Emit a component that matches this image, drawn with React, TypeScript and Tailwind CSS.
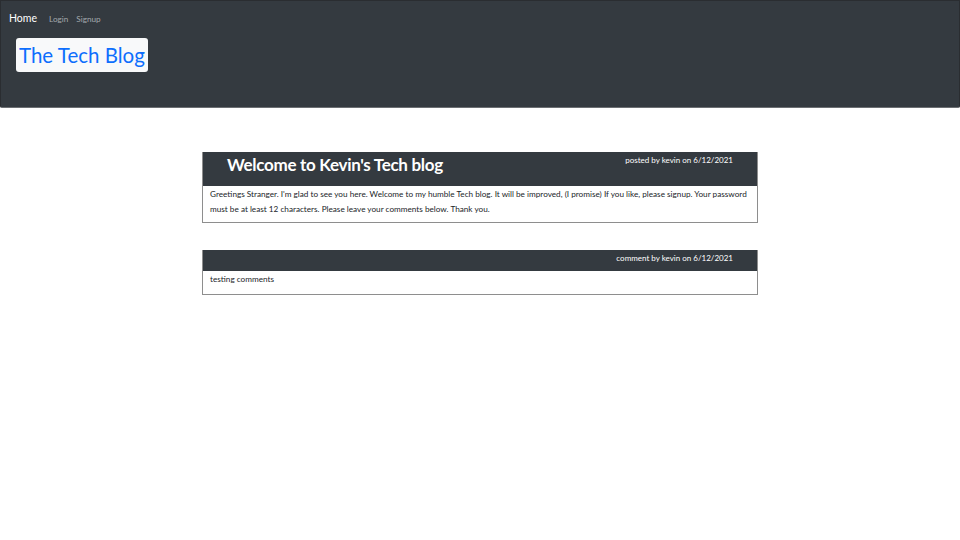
export default function App() {
  return (
    <div className="min-h-[540px] w-full bg-white font-['Lato',sans-serif]">
      {/* Header */}
      <header className="h-[108px] border border-[#2a2d31] border-b-[#6c6f73] bg-[#343a40] rounded-b-[2px]">
        <nav className="flex items-baseline px-[8px] pt-[10px]">
          <a className="text-[10.5px] text-white">Home</a>
          <a className="ml-[12px] text-[8.2px] text-[#a3a8ad]">Login</a>
          <a className="ml-[8px] text-[8.2px] text-[#a3a8ad]">Signup</a>
        </nav>
        <div className="ml-[15px] mt-[11px] inline-flex h-[34px] items-center rounded-[3px] bg-[#f8f9fa] px-[3px]">
          <h1 className="text-[20.5px] leading-none text-[#0d6efd]">The Tech Blog</h1>
        </div>
      </header>

      <main className="mx-auto mt-[44px] flex w-[556px] flex-col gap-[27px]">
        {/* Post */}
        <section className="border border-[#8e8e8e] border-t-0">
          <div className="flex h-[34px] items-start justify-between bg-[#343a40] px-[24px]">
            <h2 className="mt-[2px] text-[17px] leading-[22px] font-bold tracking-[-0.3px] text-white">
              Welcome to Kevin's Tech blog
            </h2>
            <span className="mt-[2px] text-[8px] text-white">posted by kevin on 6/12/2021</span>
          </div>
          <p className="px-[7px] pt-[1px] pb-[5px] text-[8.2px] leading-[15px] text-[#212529]">
            Greetings Stranger. I'm glad to see you here. Welcome to my humble Tech blog. It will be improved, (I promise) If you like, please signup. Your password must be at least 12 characters. Please leave your comments below. Thank you.
          </p>
        </section>

        {/* Comment */}
        <section className="border border-[#8e8e8e] border-t-0">
          <div className="flex h-[21px] items-start justify-end bg-[#343a40] pr-[24px]">
            <span className="mt-[2px] text-[8px] text-white">comment by kevin on 6/12/2021</span>
          </div>
          <p className="h-[23px] px-[7px] pt-[1px] text-[8.2px] leading-[15px] text-[#212529]">testing comments</p>
        </section>
      </main>
    </div>
  );
}
